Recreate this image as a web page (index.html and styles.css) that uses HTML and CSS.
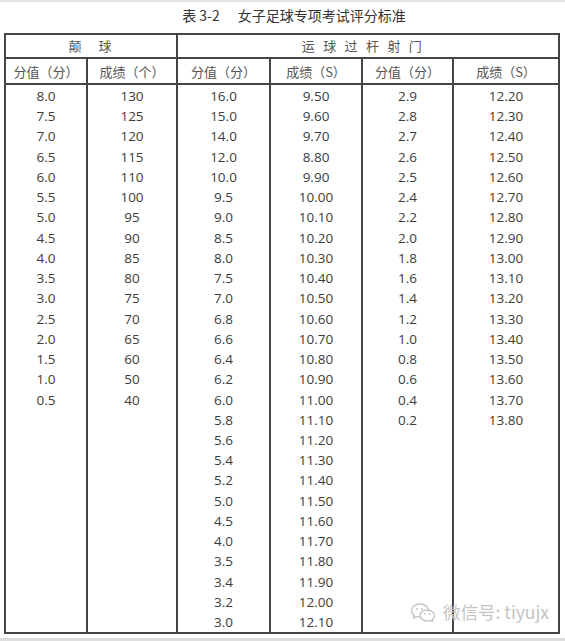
FILE: index.html
```html
<!DOCTYPE html>
<html lang="zh-CN">
<head>
<meta charset="utf-8">
<title>表 3-2 女子足球专项考试评分标准</title>
<link rel="stylesheet" href="styles.css">
</head>
<body>
<div class="topbar"></div>
<h1 class="title">表 3-2<span class="gap"></span>女子足球专项考试评分标准</h1>
<div class="sheet">
  <div class="cell h1 span2">颠　球</div>
  <div class="cell h1 span4 bl spaced">运球过杆射门</div>
  <div class="cell h2">分值（分）</div>
  <div class="cell h2 bl">成绩（个）</div>
  <div class="cell h2 bl">分值（分）</div>
  <div class="cell h2 bl">成绩（S）</div>
  <div class="cell h2 bl">分值（分）</div>
  <div class="cell h2 bl">成绩（S）</div>

  <div class="col">
    <div>8.0</div><div>7.5</div><div>7.0</div><div>6.5</div><div>6.0</div><div>5.5</div><div>5.0</div><div>4.5</div><div>4.0</div><div>3.5</div><div>3.0</div><div>2.5</div><div>2.0</div><div>1.5</div><div>1.0</div><div>0.5</div>
  </div>
  <div class="col bl">
    <div>130</div><div>125</div><div>120</div><div>115</div><div>110</div><div>100</div><div>95</div><div>90</div><div>85</div><div>80</div><div>75</div><div>70</div><div>65</div><div>60</div><div>50</div><div>40</div>
  </div>
  <div class="col bl">
    <div>16.0</div><div>15.0</div><div>14.0</div><div>12.0</div><div>10.0</div><div>9.5</div><div>9.0</div><div>8.5</div><div>8.0</div><div>7.5</div><div>7.0</div><div>6.8</div><div>6.6</div><div>6.4</div><div>6.2</div><div>6.0</div><div>5.8</div><div>5.6</div><div>5.4</div><div>5.2</div><div>5.0</div><div>4.5</div><div>4.0</div><div>3.5</div><div>3.4</div><div>3.2</div><div>3.0</div>
  </div>
  <div class="col bl">
    <div>9.50</div><div>9.60</div><div>9.70</div><div>8.80</div><div>9.90</div><div>10.00</div><div>10.10</div><div>10.20</div><div>10.30</div><div>10.40</div><div>10.50</div><div>10.60</div><div>10.70</div><div>10.80</div><div>10.90</div><div>11.00</div><div>11.10</div><div>11.20</div><div>11.30</div><div>11.40</div><div>11.50</div><div>11.60</div><div>11.70</div><div>11.80</div><div>11.90</div><div>12.00</div><div>12.10</div>
  </div>
  <div class="col bl">
    <div>2.9</div><div>2.8</div><div>2.7</div><div>2.6</div><div>2.5</div><div>2.4</div><div>2.2</div><div>2.0</div><div>1.8</div><div>1.6</div><div>1.4</div><div>1.2</div><div>1.0</div><div>0.8</div><div>0.6</div><div>0.4</div><div>0.2</div>
  </div>
  <div class="col bl">
    <div>12.20</div><div>12.30</div><div>12.40</div><div>12.50</div><div>12.60</div><div>12.70</div><div>12.80</div><div>12.90</div><div>13.00</div><div>13.10</div><div>13.20</div><div>13.30</div><div>13.40</div><div>13.50</div><div>13.60</div><div>13.70</div><div>13.80</div>
  </div>

  <div class="watermark">
    <svg class="wm-icon" width="26" height="20" viewBox="0 0 26 20" aria-hidden="true">
      <path d="M10 2 C4.8 2 1.5 5.2 1.5 8.6 C1.5 10.6 2.6 12.3 4.3 13.5 L3.6 16 L6.6 14.6 C7.6 14.9 8.7 15 9.6 15" fill="none" stroke="#c4c4c4" stroke-width="1.4" stroke-linecap="round" stroke-linejoin="round"/>
      <path d="M10 2 C14.6 2 17.8 4.6 18.3 7.6" fill="none" stroke="#c4c4c4" stroke-width="1.4" stroke-linecap="round"/>
      <path d="M17.2 8 C21.4 8 24.5 10.6 24.5 13.6 C24.5 15.2 23.7 16.5 22.4 17.5 L22.9 19.4 L20.6 18.4 C19.6 18.8 18.4 19 17.2 19 C13 19 10 16.5 10 13.5 C10 10.5 13 8 17.2 8 Z" fill="#fff" stroke="#c4c4c4" stroke-width="1.4" stroke-linejoin="round"/>
      <circle cx="7" cy="7" r="1" fill="#c4c4c4"/>
      <circle cx="12" cy="7" r="1" fill="#c4c4c4"/>
      <circle cx="14.8" cy="12" r="0.9" fill="#c4c4c4"/>
      <circle cx="19.6" cy="12" r="0.9" fill="#c4c4c4"/>
    </svg>
    <span class="wm-text">微信号: tiyujx</span>
  </div>
</div>
<div class="bottombar"></div>
</body>
</html>
```

FILE: styles.css
```css
html, body {
  margin: 0;
  padding: 0;
  background: #ffffff;
}

body {
  width: 565px;
  height: 641px;
  overflow: hidden;
  font-family: "Open Sans", "Noto Sans CJK SC", sans-serif;
  color: #333333;
}

.topbar {
  height: 2px;
  background: #e4e4e4;
}

.title {
  margin: 0 0 5px 0;
  padding-left: 23px;
  height: 26px;
  line-height: 26px;
  text-align: center;
  font-family: "Noto Sans CJK SC", sans-serif;
  font-size: 14px;
  font-weight: 400;
  color: #333333;
}

.title .gap {
  display: inline-block;
  width: 18px;
}

.sheet {
  position: relative;
  box-sizing: border-box;
  margin-left: 4px;
  width: 556px;
  border: 2px solid #454545;
  display: grid;
  grid-template-columns: 80px 90px 93px 92px 91px 106px;
  grid-template-rows: 24px 26px 547px;
}

.cell {
  box-sizing: border-box;
  border-bottom: 2px solid #454545;
  text-align: center;
  font-family: "Noto Sans CJK SC", sans-serif;
  font-size: 13px;
  color: #555555;
}

.bl {
  border-left: 2px solid #454545;
}

.span2 {
  grid-column: span 2;
}

.span4 {
  grid-column: span 4;
}

.h1 {
  line-height: 22px;
  letter-spacing: 2px;
}

.h1.spaced {
  letter-spacing: 8.4px;
  padding-right: 4px;
}

.h2 {
  line-height: 24px;
  padding-top: 1px;
}

.col {
  box-sizing: border-box;
  padding-top: 1px;
  text-align: center;
  font-family: "Open Sans", sans-serif;
  font-size: 13.5px;
  line-height: 20.23px;
  color: #3c3c3c;
}

.watermark {
  position: absolute;
  right: 9px;
  bottom: 9px;
  display: flex;
  align-items: center;
  gap: 7px;
}

.wm-icon {
  display: block;
}

.wm-text {
  font-family: "Noto Sans CJK SC", sans-serif;
  font-size: 17.5px;
  line-height: 22px;
  color: #c4c4c4;
}

.bottombar {
  margin-top: 4px;
  height: 3px;
  background: #dedede;
}
```
